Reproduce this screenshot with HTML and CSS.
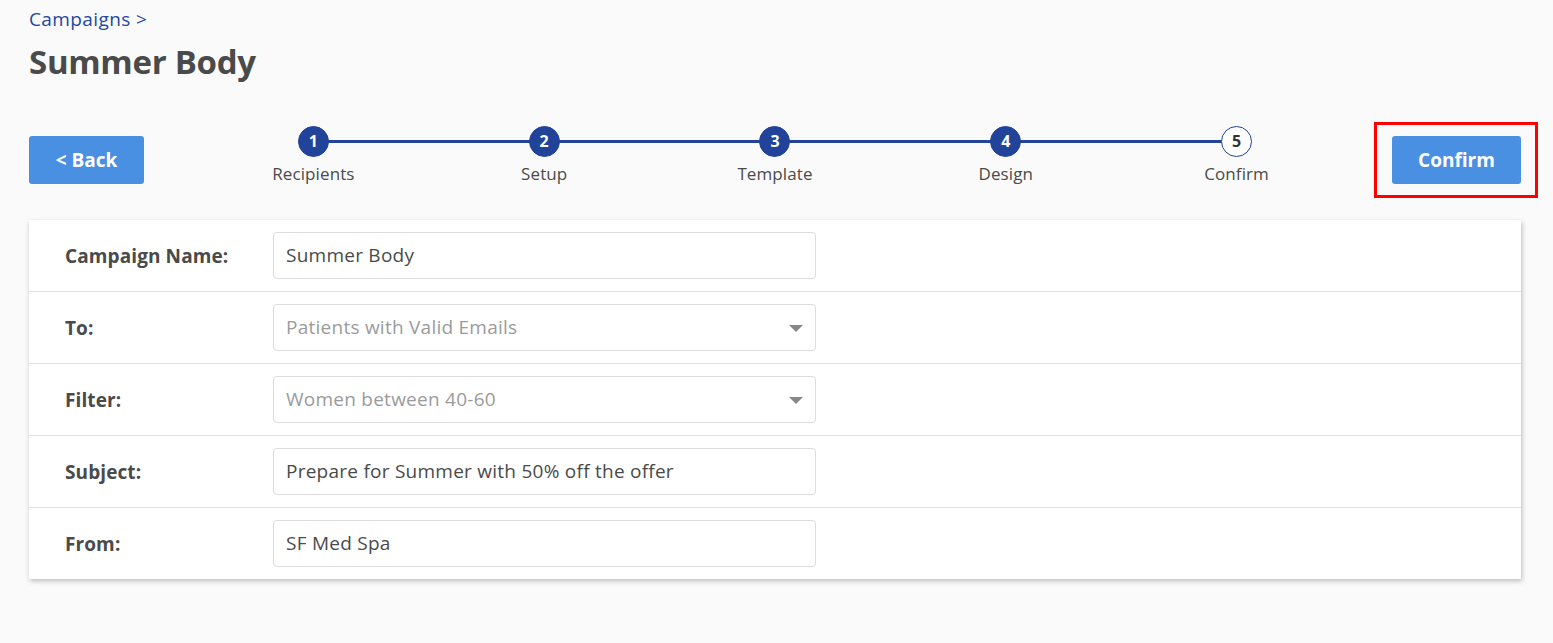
FILE: index.html
```html
<!DOCTYPE html>
<html lang="en">
<head>
<meta charset="UTF-8">
<title>Summer Body - Campaigns</title>
<link rel="stylesheet" href="styles.css">
</head>
<body>
  <div id="page">
    <a class="crumb" href="#">Campaigns &gt;</a>
    <h1 class="title">Summer Body</h1>

    <div class="toolbar">
      <button class="btn">&lt; Back</button>
      <div class="stepper">
        <div class="step done"><span class="dot">1</span><span class="label">Recipients</span></div>
        <div class="step done"><span class="dot">2</span><span class="label">Setup</span></div>
        <div class="step done"><span class="dot">3</span><span class="label">Template</span></div>
        <div class="step done"><span class="dot">4</span><span class="label">Design</span></div>
        <div class="step"><span class="dot">5</span><span class="label">Confirm</span></div>
      </div>
      <div class="highlight">
        <button class="btn">Confirm</button>
      </div>
    </div>

    <div class="card">
      <div class="row">
        <label class="row-label">Campaign Name:</label>
        <div class="field">Summer Body</div>
      </div>
      <div class="row">
        <label class="row-label">To:</label>
        <div class="field select">Patients with Valid Emails<span class="caret"></span></div>
      </div>
      <div class="row">
        <label class="row-label">Filter:</label>
        <div class="field select">Women between 40-60<span class="caret"></span></div>
      </div>
      <div class="row">
        <label class="row-label">Subject:</label>
        <div class="field">Prepare for Summer with 50% off the offer</div>
      </div>
      <div class="row">
        <label class="row-label">From:</label>
        <div class="field">SF Med Spa</div>
      </div>
    </div>
  </div>
</body>
</html>
```

FILE: styles.css
```css
body {
  margin: 0;
  background-color: #fafafa;
  font-family: "Open Sans", Arial, sans-serif;
  color: #4a4a4a;
}
#page {
  padding: 8px 32px 40px 29px;
}
.crumb {
  display: block;
  color: #2447a0;
  text-decoration: none;
  font-size: 19px;
  line-height: 22px;
  letter-spacing: 0.4px;
}
.title {
  margin: 12px 0 0;
  font-size: 33px;
  line-height: 40px;
  font-weight: bold;
  color: #4a4a4a;
  letter-spacing: -0.3px;
}
.toolbar {
  display: flex;
  align-items: flex-start;
  margin-top: 54px;
}
.btn {
  height: 48px;
  padding: 0 27px;
  border: none;
  border-radius: 3px;
  background-color: #4a90e2;
  color: #fff;
  font-family: inherit;
  font-size: 19px;
  font-weight: bold;
  cursor: pointer;
}
.toolbar > .btn {
  width: 115px;
  padding: 0;
}
.highlight {
  position: relative;
}
.highlight .btn {
  width: 129px;
  padding: 0;
}
.highlight::after {
  content: "";
  position: absolute;
  top: -14px;
  bottom: -14px;
  left: -18px;
  right: -17px;
  border: 3px solid #ff0000;
}
.stepper {
  flex: 1;
  display: flex;
  margin: -10px 40px 0 54px;
}
.step {
  flex: 1;
  position: relative;
  display: flex;
  flex-direction: column;
  align-items: center;
}
.step::before {
  content: "";
  position: absolute;
  top: 14px;
  left: 50%;
  width: 100%;
  height: 3px;
  background-color: #21449a;
}
.step:last-child::before {
  display: none;
}
.dot {
  position: relative;
  box-sizing: border-box;
  width: 31px;
  height: 31px;
  border-radius: 50%;
  border: 1px solid #21449a;
  background-color: #fff;
  color: #333;
  font-size: 16px;
  font-weight: bold;
  line-height: 29px;
  text-align: center;
}
.step.done .dot {
  background-color: #21449a;
  color: #fff;
}
.label {
  margin-top: 7px;
  font-size: 17px;
  line-height: 20px;
  letter-spacing: 0.1px;
}
.card {
  margin-top: 36px;
  background-color: #fff;
  box-shadow: 1px 2px 5px rgba(0, 0, 0, 0.25);
}
.row {
  display: flex;
  align-items: center;
  padding: 12px 0 12px 36px;
  border-bottom: 1px solid #e0e0e0;
}
.row:last-child {
  border-bottom: none;
}
.row-label {
  width: 208px;
  font-size: 19px;
  font-weight: bold;
  letter-spacing: 0.1px;
}
.field {
  position: relative;
  box-sizing: border-box;
  width: 543px;
  height: 47px;
  padding: 0 12px;
  border: 1px solid #dcdcdc;
  border-radius: 4px;
  font-size: 19px;
  line-height: 45px;
  letter-spacing: 0.25px;
  color: #4a4a4a;
}
.field.select {
  color: #9b9b9b;
}
.caret {
  position: absolute;
  right: 12px;
  top: 20px;
  border-left: 7px solid transparent;
  border-right: 7px solid transparent;
  border-top: 7px solid #888;
}
```
